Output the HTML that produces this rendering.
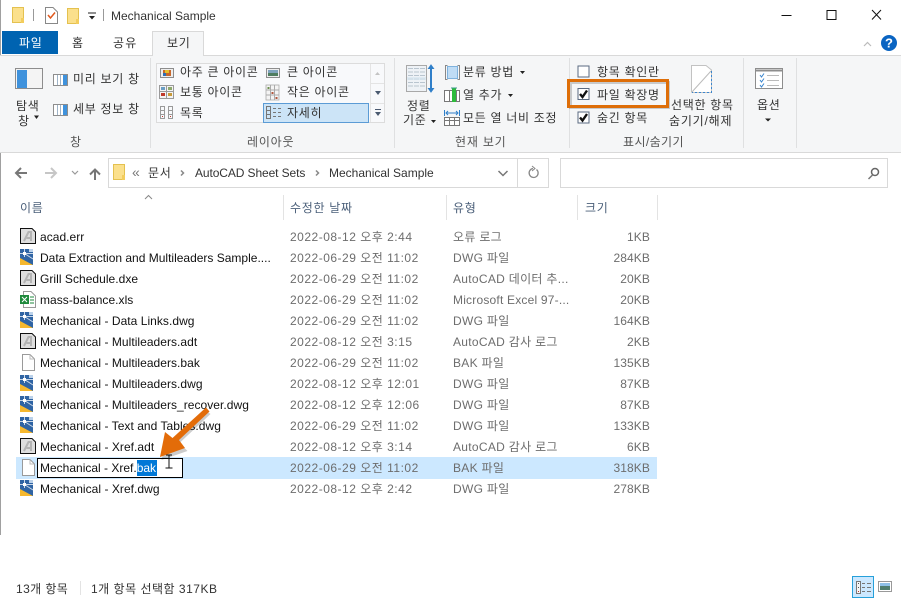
<!DOCTYPE html>
<html lang="ko"><head><meta charset="utf-8"><style>
html,body{margin:0;padding:0;background:#fff}
#w{position:relative;width:901px;height:600px;overflow:hidden;background:#fff;font:12px/16px "Liberation Sans","Noto Sans CJK KR",sans-serif;color:#222}
.t{position:absolute;white-space:nowrap;line-height:16px}
.k{letter-spacing:.7px;color:#333}
.b{position:absolute;box-sizing:border-box}
.n{color:#111;left:40px;letter-spacing:.04px}
.d{color:#6d6d6d;left:290px;letter-spacing:.5px}
.y{color:#6d6d6d;left:453px;letter-spacing:.3px}
.s{color:#6d6d6d;right:251px;letter-spacing:.1px}
.h{color:#4c607a;top:200px;letter-spacing:.7px}
.g{color:#555;letter-spacing:.8px}
svg{position:absolute;left:0;top:0}
</style></head><body><div id="w">
<div class="b" style="left:0;top:0;width:1px;height:535px;background:#a0a0a0"></div>
<div class="b" style="left:0;top:55px;width:901px;height:98px;background:#f5f6f7;border-top:1px solid #d9d9d9;border-bottom:1px solid #d9d9d9"></div>
<div class="b" style="left:2px;top:31px;width:56px;height:23px;background:#0063b1"></div>
<div class="b" style="left:152px;top:31px;width:52px;height:25px;background:#f5f6f7;border:1px solid #d9d9d9;border-bottom:0"></div>
<div class="t" style="left:19px;top:35px;color:#fff;letter-spacing:.7px">파일</div>
<div class="t k" style="left:72px;top:35px">홈</div>
<div class="t k" style="left:113px;top:35px;letter-spacing:1.200px">공유</div>
<div class="t k" style="left:167px;top:35px">보기</div>
<div class="t" style="left:111px;top:8px;color:#333">Mechanical Sample</div>

<div class="b" style="left:156px;top:63px;width:229px;height:60px;background:#f8f9fb;border:1px solid #dcdcdc"></div>
<div class="b" style="left:263px;top:103px;width:106px;height:20px;background:#cce4f7;border:1px solid #5b9bd5"></div>
<div class="b" style="left:370px;top:64px;width:1px;height:58px;background:#e4e4e4"></div>

<div class="t k" style="left:180px;top:64px">아주 큰 아이콘</div>
<div class="t k" style="left:287px;top:64px">큰 아이콘</div>
<div class="t k" style="left:180px;top:84px">보통 아이콘</div>
<div class="t k" style="left:287px;top:84px">작은 아이콘</div>
<div class="t k" style="left:180px;top:105px">목록</div>
<div class="t k" style="left:287px;top:105px">자세히</div>
<div class="t k" style="left:73px;top:71px">미리 보기 창</div>
<div class="t k" style="left:73px;top:101px">세부 정보 창</div>
<div class="t k" style="left:16px;top:98px">탐색</div>
<div class="t k" style="left:18px;top:113px">창</div>
<div class="t k" style="left:407px;top:98px">정렬</div>
<div class="t k" style="left:403px;top:112px">기준</div>
<div class="t k" style="left:463px;top:64px">분류 방법</div>
<div class="t k" style="left:463px;top:87px">열 추가</div>
<div class="t k" style="left:463px;top:110px">모든 열 너비 조정</div>
<div class="t k" style="left:597px;top:64px">항목 확인란</div>
<div class="t k" style="left:597px;top:87px">파일 확장명</div>
<div class="t k" style="left:597px;top:110px">숨긴 항목</div>
<div class="t k" style="left:671px;top:97px">선택한 항목</div>
<div class="t k" style="left:669px;top:113px;letter-spacing:.8px">숨기기/해제</div>
<div class="t k" style="left:757px;top:97px">옵션</div>
<div class="t g" style="left:70px;top:134px">창</div>
<div class="t g" style="left:247px;top:134px">레이아웃</div>
<div class="t g" style="left:455px;top:134px">현재 보기</div>
<div class="t g" style="left:623px;top:134px;letter-spacing:.4px">표시/숨기기</div>

<div class="b" style="left:108px;top:158px;width:441px;height:30px;background:#fff;border:1px solid #d9d9d9"></div>
<div class="b" style="left:517px;top:159px;width:1px;height:28px;background:#d9d9d9"></div>
<div class="b" style="left:560px;top:158px;width:328px;height:30px;background:#fff;border:1px solid #d9d9d9"></div>
<div class="t" style="left:132px;top:164px;color:#777;font-size:14px">«</div>
<div class="t k" style="left:148px;top:165px">문서</div>
<div class="t" style="left:195px;top:165px;color:#333;letter-spacing:-.1px">AutoCAD Sheet Sets</div>
<div class="t" style="left:329px;top:165px;color:#333">Mechanical Sample</div>

<div class="t h" style="left:20px">이름</div>
<div class="t h" style="left:290px">수정한 날짜</div>
<div class="t h" style="left:453px">유형</div>
<div class="t h" style="left:585px">크기</div>
<div class="b" style="left:283px;top:195px;width:1px;height:25px;background:#e3e3e3"></div>
<div class="b" style="left:446px;top:195px;width:1px;height:25px;background:#e3e3e3"></div>
<div class="b" style="left:577px;top:195px;width:1px;height:25px;background:#e3e3e3"></div>
<div class="b" style="left:657px;top:195px;width:1px;height:25px;background:#e3e3e3"></div>

<div class="b" style="left:16px;top:457px;width:641px;height:22px;background:#cce8ff"></div>
<div class="b" style="left:37px;top:458px;width:146px;height:20px;background:#fff;border:1px solid #000"></div>
<div class="b" style="left:137px;top:460px;width:20px;height:16px;background:#0078d7"></div>

<div class="t n" style="top:229px">acad.err</div><div class="t d" style="top:229px">2022-08-12 오후 2:44</div><div class="t y" style="top:229px">오류 로그</div><div class="t s" style="top:229px">1KB</div>
<div class="t n" style="top:250px;letter-spacing:0">Data Extraction and Multileaders Sample....</div><div class="t d" style="top:250px">2022-06-29 오전 11:02</div><div class="t y" style="top:250px">DWG 파일</div><div class="t s" style="top:250px">284KB</div>
<div class="t n" style="top:271px">Grill Schedule.dxe</div><div class="t d" style="top:271px">2022-06-29 오전 11:02</div><div class="t y" style="top:271px">AutoCAD 데이터 추...</div><div class="t s" style="top:271px">20KB</div>
<div class="t n" style="top:292px">mass-balance.xls</div><div class="t d" style="top:292px">2022-06-29 오전 11:02</div><div class="t y" style="top:292px;letter-spacing:.2px">Microsoft Excel 97-...</div><div class="t s" style="top:292px">20KB</div>
<div class="t n" style="top:313px">Mechanical - Data Links.dwg</div><div class="t d" style="top:313px">2022-06-29 오전 11:02</div><div class="t y" style="top:313px">DWG 파일</div><div class="t s" style="top:313px">164KB</div>
<div class="t n" style="top:334px">Mechanical - Multileaders.adt</div><div class="t d" style="top:334px">2022-08-12 오전 3:15</div><div class="t y" style="top:334px">AutoCAD 감사 로그</div><div class="t s" style="top:334px">2KB</div>
<div class="t n" style="top:355px">Mechanical - Multileaders.bak</div><div class="t d" style="top:355px">2022-06-29 오전 11:02</div><div class="t y" style="top:355px">BAK 파일</div><div class="t s" style="top:355px">135KB</div>
<div class="t n" style="top:376px">Mechanical - Multileaders.dwg</div><div class="t d" style="top:376px">2022-08-12 오후 12:01</div><div class="t y" style="top:376px">DWG 파일</div><div class="t s" style="top:376px">87KB</div>
<div class="t n" style="top:397px">Mechanical - Multileaders_recover.dwg</div><div class="t d" style="top:397px">2022-08-12 오후 12:06</div><div class="t y" style="top:397px">DWG 파일</div><div class="t s" style="top:397px">87KB</div>
<div class="t n" style="top:418px">Mechanical - Text and Tables.dwg</div><div class="t d" style="top:418px">2022-06-29 오전 11:02</div><div class="t y" style="top:418px">DWG 파일</div><div class="t s" style="top:418px">133KB</div>
<div class="t n" style="top:439px">Mechanical - Xref.adt</div><div class="t d" style="top:439px">2022-08-12 오후 3:14</div><div class="t y" style="top:439px">AutoCAD 감사 로그</div><div class="t s" style="top:439px">6KB</div>
<div class="t n" style="top:460px;letter-spacing:0">Mechanical - Xref.<span style="color:#fff">bak</span></div><div class="t d" style="top:460px">2022-06-29 오전 11:02</div><div class="t y" style="top:460px">BAK 파일</div><div class="t s" style="top:460px">318KB</div>
<div class="t n" style="top:481px">Mechanical - Xref.dwg</div><div class="t d" style="top:481px">2022-08-12 오후 2:42</div><div class="t y" style="top:481px">DWG 파일</div><div class="t s" style="top:481px">278KB</div>

<div class="t" style="left:16px;top:581px;color:#333;letter-spacing:.4px">13개 항목</div>
<div class="b" style="left:80px;top:581px;width:1px;height:14px;background:#e3e3e3"></div>
<div class="t" style="left:91px;top:581px;color:#333;letter-spacing:.5px">1개 항목 선택함 317KB</div>
<div class="b" style="left:852px;top:576px;width:22px;height:22px;background:#cce8ff;border:1px solid #26a0da"></div>

<svg width="901" height="600" viewBox="0 0 901 600" fill="none">
<defs>
<g id="dwg"><rect x="0" y="0" width="13" height="16" fill="#f6b82e"/><path d="M0 0H13V16L0 9Z" fill="#2f64a4"/><path d="M0 4.500H13M4.500 0V8M4.500 4.500L13 10" stroke="#fff" stroke-opacity=".75"/><rect x="3" y="3" width="3" height="3" fill="#fff"/><rect x="9" y="0" width="4" height="3" fill="#bcd2ea"/></g>
<g id="acad"><path d="M.5.5H12L15.500 4V15.500H.5Z" fill="#dedede" stroke="#111"/><path d="M4 13L8.500 4H11V13M6.500 10H11" stroke="#b4b4b4" stroke-width="2"/></g>
<g id="blank"><path d="M.5.5H8L12.500 5V16.500H.5Z" fill="#fff" stroke="#9a9a9a"/><path d="M8 .5V5H12.500" stroke="#bbb"/></g>
<g id="chk"><rect x=".5" y=".5" width="11" height="11" fill="#fff" stroke="#5a6a80"/></g>
<g id="tick"><path d="M2.500 6L5 9L9.500 2.500" stroke="#111" stroke-width="2.400"/></g>
<g id="folder"><path d="M.5.5H11.500V15.500H.5Z" fill="#fbe08c" stroke="#e4c14f"/><rect x="9" y="11" width="3" height="5" fill="#f3cd5d"/></g>
</defs>
<!-- title bar -->
<use href="#folder" x="12" y="7"/>
<path d="M33.500 9V21M103.500 9V21" stroke="#999"/>
<path d="M45.500 7.500H53L57.500 12V23.500H45.500Z" fill="#fff" stroke="#888"/><path d="M48 15L50.500 18L55 12.500" stroke="#e0581c" stroke-width="1.500"/>
<use href="#folder" x="67" y="8"/>
<path d="M88 13H96" stroke="#222"/><path d="M89 16H95L92 19.500Z" fill="#222"/>
<path d="M781.500 15.500H791.500" stroke="#111"/><rect x="827" y="10.500" width="9" height="9" stroke="#111"/><path d="M872 10L881 19.500M881 10L872 19.500" stroke="#111"/>
<path d="M864 46L867.500 42.500L871 46" stroke="#bbb" stroke-width="1.200"/>
<circle cx="889" cy="43" r="8" fill="#0a64c2"/>
<text x="889" y="47.500" font-family="Liberation Sans" font-size="13" font-weight="bold" fill="#fff" text-anchor="middle">?</text>
<!-- ribbon seps -->
<path d="M150.500 58V148M394.500 58V148M569.500 58V148M743.500 58V148M796.500 58V148" stroke="#dfe0e1"/>
<!-- nav pane -->
<rect x="15.500" y="68.500" width="27" height="20" fill="#f4f4f4" stroke="#8d8d8d"/><rect x="17" y="70" width="10" height="18" fill="#3f92dc"/>
<path d="M34 115.500H39L36.500 119Z" fill="#222"/>
<rect x="53.500" y="74.500" width="14" height="11" fill="#fff" stroke="#8d8d8d"/><rect x="63" y="75" width="4" height="10" fill="#3f92dc"/><path d="M57.500 75V85M60.500 75V85" stroke="#9fb4c8"/>
<rect x="53.500" y="104.500" width="14" height="11" fill="#fff" stroke="#8d8d8d"/><rect x="63" y="105" width="4" height="10" fill="#3f92dc"/><path d="M57.500 105V115M60.500 105V115" stroke="#9fb4c8"/>
<!-- layout icons -->
<rect x="160.500" y="68.500" width="13" height="9" fill="#eee" stroke="#8d8d8d"/><rect x="163" y="70" width="8" height="6" fill="#c7682d"/><rect x="165" y="70" width="4" height="3" fill="#e6c12c"/><rect x="163" y="73" width="3" height="3" fill="#2e6fb4"/>
<rect x="266.500" y="68.500" width="13" height="9" fill="#eee" stroke="#8d8d8d"/><rect x="268" y="70" width="10" height="6" fill="#7fa3bd"/><rect x="268" y="73" width="10" height="3" fill="#4f7d5f"/>
<rect x="159.500" y="85.500" width="14" height="13" fill="#f4f4f4" stroke="#9a9a9a"/><path d="M166.500 85V99M159 91.500H174" stroke="#9a9a9a"/><rect x="161" y="87" width="4" height="3" fill="#6b9ec5"/><rect x="168" y="87" width="4" height="3" fill="#8ea96e"/><rect x="161" y="93" width="4" height="3" fill="#c0392b"/><rect x="168" y="93" width="4" height="3" fill="#c89a3a"/>
<rect x="266" y="85" width="13" height="15" fill="#f4f4f4" stroke="#aaa" stroke-width=".8"/>
<path d="M270.500 85V100M274.500 85V100M266 90H279M266 95H279" stroke="#aaa"/>
<rect x="267.500" y="87" width="2" height="2" fill="#6b8e4e"/><rect x="271.500" y="92" width="2" height="2" fill="#b0563c"/><rect x="275.500" y="97" width="2" height="2" fill="#b0563c"/>
<path d="M160.500 106.500H164.500V118.500H160.500ZM168.500 106.500H172.500V118.500H168.500ZM160.500 110.500H164.500M160.500 114.500H164.500M168.500 110.500H172.500M168.500 114.500H172.500" stroke="#9a9a9a"/>
<rect x="162" y="116" width="1" height="1" fill="#c0392b"/><rect x="170" y="116" width="1" height="1" fill="#c0392b"/>
<path d="M266.500 106.500H270.500V118.500H266.500ZM266.500 110.500H270.500M266.500 114.500H270.500M273 108.500H276M278 108.500H281M273 112.500H276M278 112.500H281M273 116.500H276M278 116.500H281" stroke="#777"/>
<!-- gallery scrollbar -->
<path d="M375 75L377.500 72L380 75Z" fill="#c3c3c3"/><path d="M375 91H381L378 95Z" fill="#4a5a70"/><path d="M375 109.500H381" stroke="#4a5a70"/><path d="M375 112H381L378 116Z" fill="#4a5a70"/>
<path d="M370.500 83.500H384M370.500 103.500H384" stroke="#e4e4e4"/>
<!-- current view -->
<rect x="406.500" y="65.500" width="20" height="26" fill="#eef2f6" stroke="#a8a8a8"/><path d="M408 68.500H425M408 72H425M408 75.500H425M408 79H425M408 82.500H425M408 86H425" stroke="#b9c5cf" stroke-dasharray="5 1"/><rect x="407" y="77" width="19" height="3" fill="#d4e4f0" opacity=".6"/>
<path d="M431 67V90" stroke="#2f7fc9" stroke-width="2"/><path d="M428.500 68.500L431 65L433.500 68.500ZM428.500 88.500L431 92L433.500 88.500Z" fill="#2f7fc9" stroke="#2f7fc9"/>
<path d="M447.500 65.500H445.500V79.500H447.500M457.500 65.500H459.500V79.500H457.500" stroke="#888"/><rect x="447.500" y="66.500" width="10" height="12" fill="#bfdcf5" stroke="#7fb2dd"/>
<path d="M520 71H525L522.500 74Z" fill="#222"/>
<rect x="444.500" y="90.500" width="15" height="11" fill="#fff" stroke="#777"/><rect x="452" y="88" width="4" height="14" fill="#2dbb3c"/><path d="M449.500 90V102M456.500 90V102" stroke="#777"/><path d="M451 88H457" stroke="#3a9a8a"/>
<path d="M508 94H513L510.500 97Z" fill="#222"/>
<path d="M446 113H458M448 111L446 113L448 115M456 111L458 113L456 115" stroke="#2f7fc9"/><path d="M444.500 110V116M459.500 110V116" stroke="#2f7fc9"/>
<rect x="444.500" y="117.500" width="15" height="8" fill="#fff" stroke="#777"/><path d="M449.500 118V125M454.500 118V125M445 120.500H459" stroke="#777"/>
<path d="M431 120H436L433.500 123Z" fill="#222"/>
<!-- checkboxes -->
<use href="#chk" x="577.500" y="65.500"/><use href="#chk" x="577.500" y="88"/><use href="#tick" x="577.500" y="88"/><use href="#chk" x="577.500" y="111.500"/><use href="#tick" x="577.500" y="111.500"/>
<rect x="569.500" y="81" width="98" height="25" stroke="#000" stroke-opacity=".18" stroke-width="3" transform="translate(1 1.500)"/>
<rect x="568.500" y="80.500" width="99" height="26" stroke="#de6e08" stroke-width="3"/>
<!-- hide icon -->
<path d="M691.500 92.500V65.500H706L711.500 70V92.500H692" fill="#fff" stroke="#c2c2c2"/><path d="M691.500 92.500L711 71" stroke="#bbb"/><path d="M711.500 71V92.500H692" stroke="#3a86cf" stroke-dasharray="2 2" fill="none"/>
<path d="M765 118.500H771L768 121.500Z" fill="#222"/>
<!-- options -->
<rect x="755.500" y="68.500" width="27" height="20" fill="#fff" stroke="#8d8d8d"/><path d="M756 70.500H782" stroke="#8d8d8d" stroke-width="2"/>
<path d="M760 75L761.500 77L764 73.500M760 80L761.500 82L764 78.500M760 85L761.500 87L764 83.500" stroke="#3a86cf"/><path d="M767 75.500H779M767 80.500H779M767 85.500H779" stroke="#bbb"/>
<!-- nav -->
<path d="M16 173H27M21 168L16 173L21 178" stroke="#777" stroke-width="2"/>
<path d="M45 173H56M51 168L56 173L51 178" stroke="#c6c6c6" stroke-width="2"/>
<path d="M72 171L75 174L78 171" stroke="#999" stroke-width="1.200"/>
<path d="M95 180V170M90 174.500L95 169.500L100 174.500" stroke="#777" stroke-width="2"/>
<use href="#folder" x="113" y="164"/>
<path d="M181 170.500L183.500 173L181 175.500M316 170.500L318.500 173L316 175.500" stroke="#888" stroke-width="1.500"/>
<path d="M498.500 171L503 175.500L507.500 171" stroke="#777" stroke-width="1.500"/>
<path d="M536.500 169.500A4.500 4.500 0 1 1 533 168.500" stroke="#888" stroke-width="1.300"/><path d="M532 166L535 168.500L532 171" stroke="#888"/>
<circle cx="875" cy="172" r="3.500" stroke="#666" stroke-width="1.500"/><path d="M872.500 175L868.500 179" stroke="#777" stroke-width="1.500"/>
<path d="M145 199L148.500 195.500L152 199" stroke="#888"/>
<!-- file icons -->
<use href="#acad" x="20" y="228"/><use href="#dwg" x="20" y="249"/><use href="#acad" x="20" y="270"/>
<path d="M23.500 291.500H31L35.500 296V307.500H23.500Z" fill="#fff" stroke="#999"/><rect x="20" y="295" width="9" height="9" fill="#1f8a3c"/><path d="M22 297L27 302M27 297L22 302" stroke="#fff"/><path d="M30 297H34M30 300H34M30 303H34" stroke="#1f8a3c"/>
<use href="#dwg" x="20" y="312"/><use href="#acad" x="20" y="333"/><use href="#blank" x="22" y="354"/><use href="#dwg" x="20" y="375"/><use href="#dwg" x="20" y="396"/><use href="#dwg" x="20" y="417"/><use href="#acad" x="20" y="438"/><use href="#blank" x="22" y="459"/><use href="#dwg" x="20" y="480"/>
<!-- cursor -->
<path d="M166 455H172M169 455V468M165.500 468H172.500" stroke="#111"/>
<!-- orange arrow -->
<path d="M209 412L178 441L186 449L160 458L166 433L174 441L205 409Z" fill="#000" opacity=".2" transform="translate(1.500 2)"/>
<path d="M206 407.500L209.500 411.500L179 440L185 448L160 457L165 432L172.500 438Z" fill="#e36c09"/>
<!-- status icons -->
<rect x="856.500" y="581.500" width="4" height="12" fill="#f4f4f4" stroke="#777"/><rect x="858" y="583" width="1" height="1" fill="#555"/><rect x="858" y="587" width="1" height="1" fill="#555"/><rect x="858" y="591" width="1" height="1" fill="#c0392b"/>
<path d="M862 583.500H865M867 583.500H871M862 587.500H865M867 587.500H871M862 591.500H865M867 591.500H871" stroke="#777"/>
<rect x="878.500" y="581.500" width="13" height="10" fill="#fff" stroke="#999"/><rect x="880" y="583" width="10" height="7" fill="#8fc0e8"/><rect x="880" y="586" width="10" height="4" fill="#4f7d6f"/>
</svg>
</div></body></html>
